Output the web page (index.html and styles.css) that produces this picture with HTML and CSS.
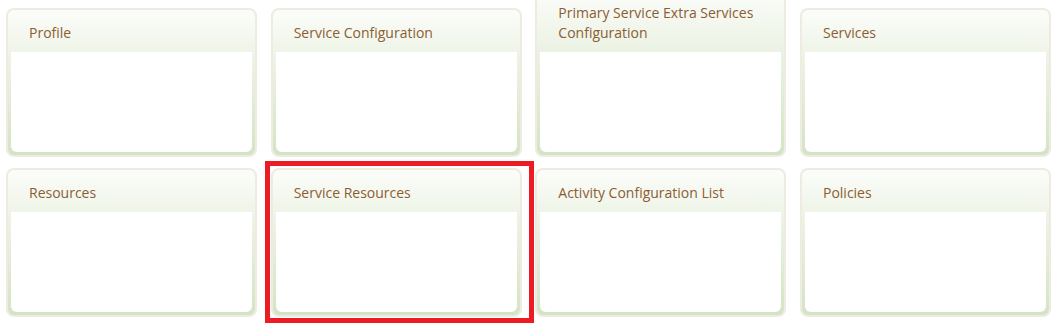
FILE: index.html
```html
<!DOCTYPE html>
<html lang="en">
<head>
    <meta charset="UTF-8">
    <meta name="viewport" content="width=device-width, initial-scale=1.0">
    <title>Setup</title>
    <link rel="stylesheet" href="styles.css">
</head>
<body>

    <div class="tiles">
        <div class="tile">
            <div class="tile-title">Profile</div>
            <div class="tile-body"></div>
        </div>
        <div class="tile">
            <div class="tile-title">Service Configuration</div>
            <div class="tile-body"></div>
        </div>
        <div class="tile">
            <div class="tile-title">Primary Service Extra Services Configuration</div>
            <div class="tile-body"></div>
        </div>
        <div class="tile">
            <div class="tile-title">Services</div>
            <div class="tile-body"></div>
        </div>
        <div class="tile">
            <div class="tile-title">Resources</div>
            <div class="tile-body"></div>
        </div>
        <div class="tile selected">
            <div class="tile-title">Service Resources</div>
            <div class="tile-body"></div>
        </div>
        <div class="tile">
            <div class="tile-title">Activity Configuration List</div>
            <div class="tile-body"></div>
        </div>
        <div class="tile">
            <div class="tile-title">Policies</div>
            <div class="tile-body"></div>
        </div>
    </div>

</body>
</html>
```

FILE: styles.css
```css
html, body {
    height: 100%;
}

body {
    margin: 0;
    background-color: #ffffff;
    font-family: "Open Sans", "Noto Sans", sans-serif;
    overflow: hidden;
}

/* page is scrolled a little, so the tallest tile is cut at the top */
.tiles {
    display: grid;
    grid-template-columns: repeat(4, 251px);
    column-gap: 13.67px;
    row-gap: 11px;
    align-items: end;
    padding: 0 0 0 6px;
    transform: translateY(-12px);
}

.tile {
    position: relative;
    border: 2px solid #f0ebe1;
    border-radius: 8px;
    background: linear-gradient(#fcfdfa, #eef4e7 30%, #d3e4c4);
    padding: 0 3px 3px;
}

.tile-title {
    padding: 13px 18px 9px;
    font-size: 14px;
    line-height: 20px;
    color: #8b5d33;
}

.tile-body {
    height: 100px;
    background-color: #ffffff;
    border-radius: 0 0 6px 6px;
}

.selected::after {
    content: "";
    position: absolute;
    top: -9px;
    left: -8px;
    right: -14px;
    bottom: -8px;
    border: 5px solid #ed1c24;
}
```
